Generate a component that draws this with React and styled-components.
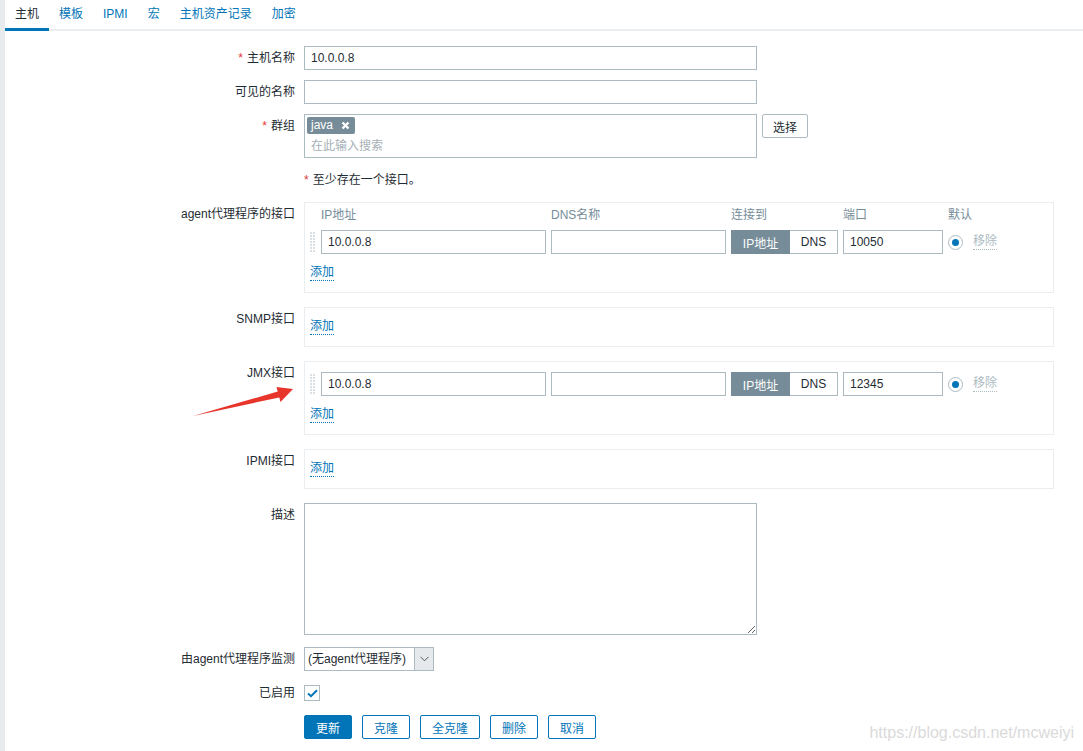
import React from "react";
import styled, { createGlobalStyle, css } from "styled-components";

const GlobalStyle = createGlobalStyle`
  html, body { margin: 0; padding: 0; background: #fff; }
  body {
    font-family: Arial, "Liberation Sans", "Noto Sans CJK SC", sans-serif;
    font-size: 12px;
    color: #1f2c33;
  }
  * { box-sizing: border-box; }
`;

const Page = styled.div`
  position: relative;
  height: 100vh;
  overflow: hidden;
  border-left: 5px solid #e8ebee;
`;

const TabBar = styled.div`
  display: flex;
  height: 31px;
  border-bottom: 2px solid #ebeef0;
`;

const Tab = styled.div`
  padding: 1px 10px 0;
  height: 31px;
  line-height: 27px;
  color: ${(p) => (p.$active ? "#1f2c33" : "#0275b8")};
  border-bottom: 3px solid ${(p) => (p.$active ? "#0275b8" : "transparent")};
  cursor: pointer;
`;

const Form = styled.div`
  display: flex;
  flex-direction: column;
  gap: 10px;
  padding: 15px 29px 0 0;
`;

const Row = styled.div`
  display: grid;
  grid-template-columns: 290px 1fr;
  column-gap: 9px;
  margin-bottom: ${(p) => p.$extra || 0}px;
`;

const Label = styled.div`
  text-align: right;
  line-height: 24px;
  white-space: nowrap;
`;

const Req = styled.span`
  color: #e33734;
  margin-right: 4px;
`;

const Field = styled.div`
  display: flex;
  align-items: flex-start;
`;

const TextInput = styled.input`
  width: ${(p) => p.$w || 453}px;
  height: 24px;
  border: 1px solid #acbbc2;
  padding: 0 6px;
  font: inherit;
  color: #1f2c33;
  background: #fff;
  outline: none;
  border-radius: 0;
`;

const MultiSelect = styled.div`
  width: 453px;
  height: 44px;
  border: 1px solid #acbbc2;
  padding: 2px 2px 0;
`;

const TagChip = styled.span`
  display: inline-flex;
  align-items: center;
  gap: 8px;
  height: 17px;
  padding: 0 5px 0 4px;
  background: #768d99;
  color: #fff;
  line-height: 17px;
  border-radius: 2px;
`;

const Placeholder = styled.div`
  color: #a6b0b6;
  padding: 4px 4px 0;
  line-height: 16px;
`;

const GreyButton = styled.button`
  margin-left: 5px;
  height: 24px;
  padding: 0 10px;
  border: 1px solid #acbbc2;
  background: #fff;
  color: #1f2c33;
  font: inherit;
  border-radius: 2px;
`;

const Note = styled.div`
  line-height: 24px;
`;

const IfaceBox = styled.div`
  border: 1px solid #ebeef0;
  padding: ${(p) => (p.$header ? 4 : 10)}px 5px 10px;
`;

const IfaceGrid = styled.div`
  display: grid;
  grid-template-columns: 6px 225px 175px 107px 100px 15px auto;
  column-gap: 5px;
  align-items: center;
`;

const HeadCell = styled.div`
  color: #768d99;
  line-height: 16px;
  height: 16px;
  margin-bottom: 7px;
  grid-column: ${(p) => p.$span || "auto"};
`;

const Handle = styled.div`
  width: 6px;
  height: 20px;
  background-image: linear-gradient(to bottom, transparent 2px, #fff 2px),
    linear-gradient(to right, #d9dfe2 2px, transparent 2px);
  background-size: 3px 3px, 3px 3px;
`;

const Segmented = styled.div`
  display: flex;
  height: 24px;
`;

const SegBtn = styled.div`
  display: flex;
  align-items: center;
  justify-content: center;
  flex: ${(p) => p.$flex};
  ${(p) =>
    p.$on
      ? css`
          background: #768d99;
          color: #fff;
          border: 1px solid #768d99;
        `
      : css`
          background: #fff;
          color: #1f2c33;
          border: 1px solid #acbbc2;
          border-left: none;
        `}
`;

const Radio = styled.span`
  width: 15px;
  height: 15px;
  border: 1px solid #acbbc2;
  border-radius: 50%;
  display: flex;
  align-items: center;
  justify-content: center;
  &::after {
    content: "";
    width: 7px;
    height: 7px;
    border-radius: 50%;
    background: #0275b8;
  }
`;

const Link = styled.span`
  color: ${(p) => (p.$disabled ? "#acbbc2" : "#0275b8")};
  border-bottom: 1px dotted ${(p) => (p.$disabled ? "#acbbc2" : "#0275b8")};
  line-height: 15px;
  justify-self: start;
  margin-left: ${(p) => p.$ml || 0}px;
`;

const AddLine = styled.div`
  line-height: 18px;
  height: 18px;
  margin-top: ${(p) => (p.$first ? 0 : 10)}px;
  display: flex;
  align-items: center;
`;

const TextArea = styled.textarea`
  width: 453px;
  height: 132px;
  border: 1px solid #acbbc2;
  font: inherit;
  outline: none;
  display: block;
  border-radius: 0;
`;

const SelectBox = styled.div`
  display: flex;
  width: 130px;
  height: 24px;
  border: 1px solid #acbbc2;
  background: #fff;
`;

const SelectText = styled.div`
  flex: 1;
  line-height: 22px;
  padding-left: 3px;
  white-space: nowrap;
`;

const SelectArrow = styled.div`
  width: 19px;
  background: #e6e9eb;
  border-left: 1px solid #acbbc2;
  display: flex;
  align-items: center;
  justify-content: center;
`;

const CheckRow = styled.div`
  height: 24px;
  display: flex;
  align-items: center;
`;

const CheckBox = styled.span`
  width: 16px;
  height: 16px;
  border: 1px solid #acbbc2;
  display: flex;
  align-items: center;
  justify-content: center;
`;

const Buttons = styled.div`
  display: flex;
  gap: 10px;
`;

const ActionButton = styled.button`
  height: 24px;
  padding: 0 11px;
  font: inherit;
  border-radius: 2px;
  border: 1px solid #0275b8;
  background: ${(p) => (p.$primary ? "#0275b8" : "#fff")};
  color: ${(p) => (p.$primary ? "#fff" : "#0275b8")};
`;

const Arrow = styled.svg`
  position: absolute;
  left: 0;
  top: 0;
  pointer-events: none;
`;

const Watermark = styled.div`
  position: absolute;
  right: 9px;
  bottom: 9px;
  font-family: Arial, "Liberation Sans", sans-serif;
  font-size: 16px;
  line-height: 18px;
  color: #dadada;
`;

function IfaceRow({ ip, port }) {
  return (
    <>
      <Handle />
      <TextInput $w={225} defaultValue={ip} />
      <TextInput $w={175} defaultValue="" />
      <Segmented>
        <SegBtn $on $flex="0 0 59px">IP地址</SegBtn>
        <SegBtn $flex="1">DNS</SegBtn>
      </Segmented>
      <TextInput $w={100} defaultValue={port} />
      <Radio />
      <Link $disabled $ml={5}>移除</Link>
    </>
  );
}

export default function App() {
  const tabs = ["主机", "模板", "IPMI", "宏", "主机资产记录", "加密"];
  return (
    <Page>
      <GlobalStyle />
      <TabBar>
        {tabs.map((t, i) => (
          <Tab key={t} $active={i === 0}>{t}</Tab>
        ))}
      </TabBar>
      <Form>
        <Row>
          <Label><Req>*</Req>主机名称</Label>
          <Field><TextInput defaultValue="10.0.0.8" /></Field>
        </Row>
        <Row>
          <Label>可见的名称</Label>
          <Field><TextInput defaultValue="" /></Field>
        </Row>
        <Row>
          <Label><Req>*</Req>群组</Label>
          <Field>
            <MultiSelect>
              <TagChip>
                java
                <svg width="9" height="9" viewBox="0 0 9 9">
                  <path d="M1.5 1.5 L7.5 7.5 M7.5 1.5 L1.5 7.5" stroke="#fff" strokeWidth="2.4" />
                </svg>
              </TagChip>
              <Placeholder>在此输入搜索</Placeholder>
            </MultiSelect>
            <GreyButton>选择</GreyButton>
          </Field>
        </Row>
        <Row>
          <Label />
          <Note><Req>*</Req>至少存在一个接口。</Note>
        </Row>
        <Row $extra={4}>
          <Label>agent代理程序的接口</Label>
          <IfaceBox $header>
            <IfaceGrid>
              <HeadCell />
              <HeadCell>IP地址</HeadCell>
              <HeadCell>DNS名称</HeadCell>
              <HeadCell>连接到</HeadCell>
              <HeadCell>端口</HeadCell>
              <HeadCell $span="6 / 8">默认</HeadCell>
              <IfaceRow ip="10.0.0.8" port="10050" />
            </IfaceGrid>
            <AddLine><Link>添加</Link></AddLine>
          </IfaceBox>
        </Row>
        <Row $extra={4}>
          <Label>SNMP接口</Label>
          <IfaceBox>
            <AddLine $first><Link>添加</Link></AddLine>
          </IfaceBox>
        </Row>
        <Row $extra={4}>
          <Label>JMX接口</Label>
          <IfaceBox>
            <IfaceGrid>
              <IfaceRow ip="10.0.0.8" port="12345" />
            </IfaceGrid>
            <AddLine><Link>添加</Link></AddLine>
          </IfaceBox>
        </Row>
        <Row $extra={4}>
          <Label>IPMI接口</Label>
          <IfaceBox>
            <AddLine $first><Link>添加</Link></AddLine>
          </IfaceBox>
        </Row>
        <Row $extra={2}>
          <Label>描述</Label>
          <Field><TextArea /></Field>
        </Row>
        <Row>
          <Label>由agent代理程序监测</Label>
          <Field>
            <SelectBox>
              <SelectText>(无agent代理程序)</SelectText>
              <SelectArrow>
                <svg width="9" height="6" viewBox="0 0 9 6">
                  <path d="M0.5 0.8 L4.5 4.8 L8.5 0.8" fill="none" stroke="#555" strokeWidth="1" />
                </svg>
              </SelectArrow>
            </SelectBox>
          </Field>
        </Row>
        <Row>
          <Label>已启用</Label>
          <CheckRow>
            <CheckBox>
              <svg width="11" height="9" viewBox="0 0 11 9">
                <path d="M1 4.5 L4 7.2 L10 1.2" fill="none" stroke="#0275b8" strokeWidth="2" />
              </svg>
            </CheckBox>
          </CheckRow>
        </Row>
        <Row>
          <Label />
          <Buttons>
            <ActionButton $primary>更新</ActionButton>
            <ActionButton>克隆</ActionButton>
            <ActionButton>全克隆</ActionButton>
            <ActionButton>删除</ActionButton>
            <ActionButton>取消</ActionButton>
          </Buttons>
        </Row>
      </Form>
      <Arrow width="1078" height="751" viewBox="5 0 1078 751">
        <polygon
          points="193,416 277.7,391.6 276.5,387.1 293,389 280.5,401.9 279.3,397.4"
          fill="#e8352c"
        />
      </Arrow>
      <Watermark>https://blog.csdn.net/mcweiyi</Watermark>
    </Page>
  );
}
